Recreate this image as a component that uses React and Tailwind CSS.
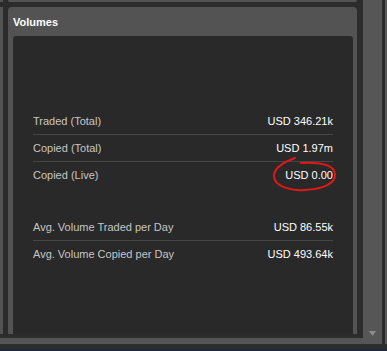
import React from "react";

const groups = [
  [
    { label: "Traded (Total)", value: "USD 346.21k" },
    { label: "Copied (Total)", value: "USD 1.97m" },
    { label: "Copied (Live)", value: "USD 0.00" },
  ],
  [
    { label: "Avg. Volume Traded per Day", value: "USD 86.55k" },
    { label: "Avg. Volume Copied per Day", value: "USD 493.64k" },
  ],
];

function StatRow({ label, value, last }) {
  return (
    <div className={last ? "" : "border-b border-[#464646]"}>
      <div className="h-[26px] flex items-center justify-between text-[11px]">
        <span className="text-[#c6c6c6]">{label}</span>
        <span className="text-white">{value}</span>
      </div>
    </div>
  );
}

export default function App() {
  return (
    <div className="relative w-[387px] h-[351px] overflow-hidden bg-[#2c2c2c] font-['Liberation_Sans',Arial,sans-serif]">
      <div className="flex h-[344px]">
        <div className="flex flex-col w-[363px]">
          {/* scroll viewport */}
          <div className="h-[334px] overflow-hidden flex flex-col">
            <div className="flex gap-[5px] h-[2px] shrink-0">
              <div className="w-[3px] bg-[#535353]" />
              <div className="w-[349px] bg-[#535353] rounded-b-[3px]" />
            </div>
            <div className="flex gap-[5px] mt-[5px] flex-1 min-h-0">
              <div className="w-[3px] bg-[#535353]" />
              <section className="w-[349px] bg-[#535353] rounded-t-[4px] pl-[5px] pr-[4px] flex flex-col">
                <h2 className="pt-[9px] pb-[7px] leading-[13px] text-[11px] font-bold text-white">
                  Volumes
                </h2>
                <div className="flex-1 bg-[#292929] rounded-t-[3px] px-[20px] pt-[72px]">
                  {groups.map((rows, gi) => (
                    <div key={gi} className={gi > 0 ? "mt-[26px]" : ""}>
                      {rows.map((r, i) => (
                        <StatRow
                          key={r.label}
                          label={r.label}
                          value={r.value}
                          last={i === rows.length - 1}
                        />
                      ))}
                    </div>
                  ))}
                </div>
              </section>
            </div>
          </div>
          <div className="h-[4px]" />
          <div className="h-[6px] bg-[#545454]" />
        </div>
        {/* vertical scrollbar */}
        <div className="w-[19px] bg-[#565656] flex flex-col justify-end items-center pb-[8px]">
          <svg width="7" height="5" viewBox="0 0 7 5">
            <polygon points="0,0 7,0 3.5,5" fill="#8c8c8c" />
          </svg>
        </div>
        <div className="w-[3px]" />
        <div className="w-[2px] bg-[#5a5a5a]" />
      </div>
      <div className="h-[5px]" />
      <div className="h-[2px] bg-[#1d2b3c]" />

      {/* hand-drawn highlight around the live value */}
      <svg
        className="absolute left-0 top-0 pointer-events-none"
        width="387"
        height="351"
        viewBox="0 0 387 351"
      >
        <path
          d="M295 158 C284 162 274 168 274 176 C274 186 290 191 305 190 C322 189 336 184 335 174 C334 165 321 162 301 163"
          fill="none"
          stroke="#e01818"
          strokeWidth="2"
          strokeLinecap="round"
        />
      </svg>
    </div>
  );
}
